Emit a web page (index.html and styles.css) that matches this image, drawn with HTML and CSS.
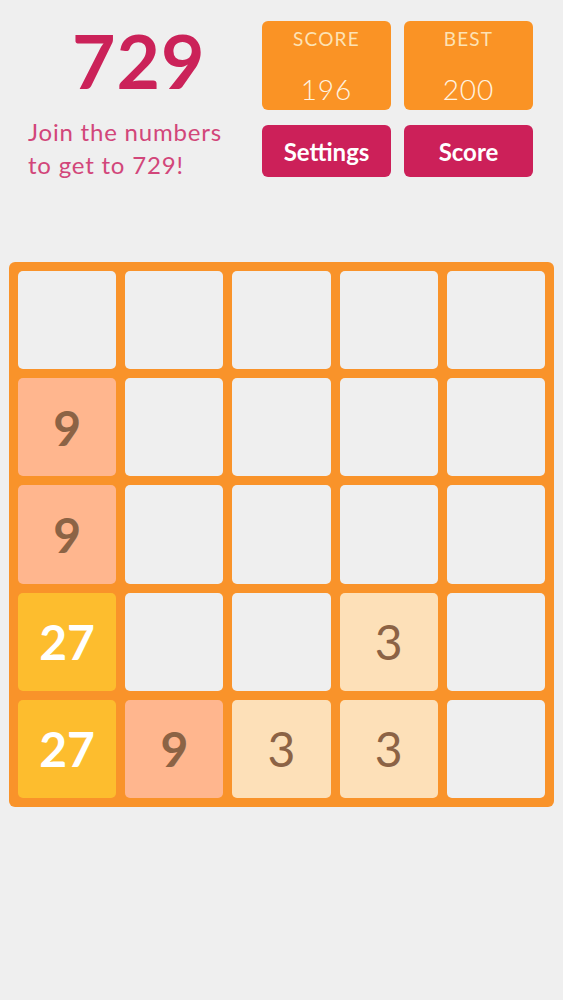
FILE: index.html
```html
<!DOCTYPE html>
<html lang="en">
<head>
  <meta charset="UTF-8">
  <title>729</title>
  <link rel="stylesheet" href="styles.css">
</head>
<body>

<header class="top">
  <div class="intro">
    <h1 class="title">729</h1>
    <p class="subtitle">Join the numbers<br>to get to 729!</p>
  </div>
  <div class="panel">
    <div class="score-box">
      <span class="label">SCORE</span>
      <span class="value">196</span>
    </div>
    <div class="score-box">
      <span class="label">BEST</span>
      <span class="value">200</span>
    </div>
    <button class="btn">Settings</button>
    <button class="btn">Score</button>
  </div>
</header>

<!-- game board, 5x5 -->
<div class="board">
  <div class="tile"></div>
  <div class="tile"></div>
  <div class="tile"></div>
  <div class="tile"></div>
  <div class="tile"></div>

  <div class="tile t9">9</div>
  <div class="tile"></div>
  <div class="tile"></div>
  <div class="tile"></div>
  <div class="tile"></div>

  <div class="tile t9">9</div>
  <div class="tile"></div>
  <div class="tile"></div>
  <div class="tile"></div>
  <div class="tile"></div>

  <div class="tile t27">27</div>
  <div class="tile"></div>
  <div class="tile"></div>
  <div class="tile t3">3</div>
  <div class="tile"></div>

  <div class="tile t27">27</div>
  <div class="tile t9">9</div>
  <div class="tile t3">3</div>
  <div class="tile t3">3</div>
  <div class="tile"></div>
</div>

</body>
</html>
```

FILE: styles.css
```css
body {
  margin: 0;
  background: #efefef;
  font-family: Lato, "Noto Sans", sans-serif;
}
.top {
  display: flex;
  padding: 21px 29px 0 28px;
}
.intro {
  width: 234px;
}
.title {
  margin: 2px 0 0;
  padding-left: 44px;
  font-size: 75px;
  line-height: 75px;
  font-weight: 700;
  letter-spacing: 1px;
  color: #cb2259;
}
.subtitle {
  margin: 17px 0 0;
  font-size: 24px;
  line-height: 33px;
  letter-spacing: 0.8px;
  color: #d2467a;
}
.panel {
  display: grid;
  grid-template-columns: 129px 129px;
  grid-template-rows: 89px 52px;
  column-gap: 13px;
  row-gap: 15px;
}
.score-box {
  display: flex;
  flex-direction: column;
  align-items: center;
  background: #fa9325;
  border-radius: 6px;
}
.score-box .label {
  margin-top: 6px;
  font-size: 19px;
  line-height: 23px;
  letter-spacing: 1.2px;
  color: #fde2b4;
}
.score-box .value {
  margin-top: 22px;
  font-size: 28px;
  line-height: 34px;
  font-weight: 300;
  letter-spacing: 1px;
  color: #fff4e2;
}
.btn {
  border: 0;
  border-radius: 6px;
  background: #cc2059;
  color: #fff;
  font-family: inherit;
  font-size: 24px;
  font-weight: 700;
  padding: 0;
}
.board {
  margin: 81px 9px 0;
  padding: 9px;
  display: grid;
  grid-template-columns: repeat(5, 1fr);
  gap: 9px;
  background: #f9932a;
  border-radius: 6px;
}
.tile {
  aspect-ratio: 1;
  border-radius: 5px;
  background: #efefef;
  display: flex;
  align-items: center;
  justify-content: center;
  font-size: 48px;
  font-weight: 700;
  color: #8c6345;
}
.t3 {
  background: #fde0b8;
  font-weight: 400;
}
.t9 {
  background: #ffb68e;
}
.t27 {
  background: #fdbd2e;
  color: #fff;
}
```
